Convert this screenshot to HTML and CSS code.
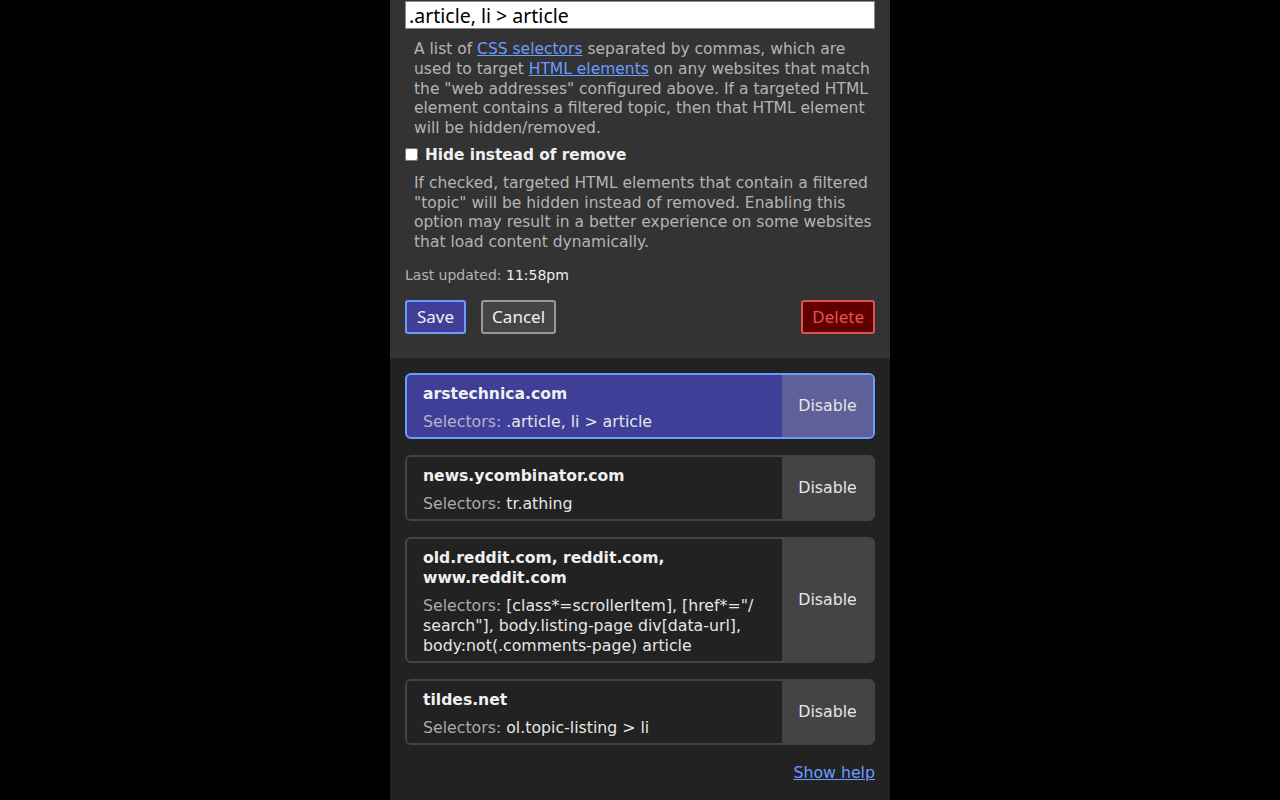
FILE: index.html
```html
<!DOCTYPE html>
<html>
<head>
<meta charset="utf-8">
<link rel="stylesheet" href="styles.css">
</head>
<body>
<div class="panel">
  <section class="editor">
    <input class="selectors-input" type="text" value=".article, li &gt; article">
    <p class="help help-first">A list of <a href="#">CSS selectors</a> separated by commas, which are used to target <a href="#">HTML elements</a> on any websites that match the "web addresses" configured above. If a targeted HTML element contains a filtered topic, then that HTML element will be hidden/removed.</p>
    <label class="check"><input type="checkbox" class="box"><span>Hide instead of remove</span></label>
    <p class="help help-second">If checked, targeted HTML elements that contain a filtered "topic" will be hidden instead of removed. Enabling this option may result in a better experience on some websites that load content dynamically.</p>
    <div class="updated">Last updated: <span class="time">11:58pm</span></div>
    <div class="actions">
      <button class="btn btn-save">Save</button>
      <button class="btn btn-cancel">Cancel</button>
      <span class="spacer"></span>
      <button class="btn btn-delete">Delete</button>
    </div>
  </section>
  <section class="list">
    <div class="card active">
      <div class="card-body">
        <div class="card-title">arstechnica.com</div>
        <div class="card-sel"><span class="lbl">Selectors:</span> .article, li &gt; article</div>
      </div>
      <div class="card-toggle">Disable</div>
    </div>
    <div class="card">
      <div class="card-body">
        <div class="card-title">news.ycombinator.com</div>
        <div class="card-sel"><span class="lbl">Selectors:</span> tr.athing</div>
      </div>
      <div class="card-toggle">Disable</div>
    </div>
    <div class="card">
      <div class="card-body">
        <div class="card-title">old.reddit.com, reddit.com, www.reddit.com</div>
        <div class="card-sel"><span class="lbl">Selectors:</span> [class*=scrollerItem], [href*="/<wbr>search"], body.listing-page div[data-url], body:not(.comments-page) article</div>
      </div>
      <div class="card-toggle">Disable</div>
    </div>
    <div class="card">
      <div class="card-body">
        <div class="card-title">tildes.net</div>
        <div class="card-sel"><span class="lbl">Selectors:</span> ol.topic-listing &gt; li</div>
      </div>
      <div class="card-toggle">Disable</div>
    </div>
    <div class="foot"><a href="#">Show help</a></div>
  </section>
</div>
</body>
</html>
```
FILE: styles.css
```css
html, body {
  margin: 0;
  padding: 0;
  background: #000;
}
body {
  font-family: "DejaVu Sans", Verdana, sans-serif;
  color: #e6e6e6;
}
.panel {
  width: 500px;
  margin: 0 auto;
  min-height: 800px;
  background: #222222;
  display: flex;
  flex-direction: column;
}
.editor {
  background: #333333;
  padding: 1px 15px 23px;
  border-bottom: 1px solid #3a3a3a;
}
.selectors-input {
  display: block;
  box-sizing: border-box;
  width: 470px;
  height: 28px;
  margin: 0;
  padding: 0 3px;
  border: 1px solid #888;
  background: #fff;
  color: #000;
  font-family: "Noto Sans", sans-serif;
  font-size: 19.5px;
}
.help {
  margin: 0 0 0 9px;
  font-size: 15.5px;
  line-height: 19.75px;
  color: #b4b4b4;
}
.help-first {
  margin-top: 11px;
}
.help-second {
  margin-top: 10px;
}
.help a {
  color: #6a9cff;
}
.check {
  display: flex;
  align-items: center;
  gap: 7px;
  margin-top: 7px;
  font-size: 15.3px;
  font-weight: bold;
  color: #f0f0f0;
}
.box {
  margin: 0;
  width: 13px;
  height: 13px;
}
.updated {
  margin-top: 14px;
  font-size: 14px;
  color: #b4b4b4;
}
.time {
  color: #f0f0f0;
}
.actions {
  display: flex;
  align-items: center;
  gap: 15px;
  margin-top: 17px;
}
.spacer {
  flex: 1;
}
.btn {
  height: 34px;
  padding: 0 9px;
  border: 2px solid;
  border-radius: 3px;
  font-family: "Noto Sans", sans-serif;
  font-size: 17px;
}
.btn-save {
  padding: 0 10px;
  background: #3f3f9a;
  border-color: #6a9cff;
  color: #f0f0f0;
}
.btn-cancel {
  background: #444;
  border-color: #999;
  color: #f0f0f0;
}
.btn-delete {
  background: #600000;
  border-color: #e05252;
  color: #e05656;
}
.list {
  padding: 15px 15px 0;
  display: flex;
  flex-direction: column;
  gap: 16px;
}
.card {
  display: flex;
  border: 2px solid #444;
  border-radius: 6px;
  background: #222;
  overflow: hidden;
}
.card.active {
  background: #3f3f99;
  border-color: #6a9cff;
}
.card-body {
  flex: 1;
  padding: 9px 16px 5px;
}
.card-title {
  font-weight: bold;
  font-size: 15.6px;
  line-height: 20px;
  color: #f0f0f0;
  margin-bottom: 8px;
}
.card-sel {
  font-size: 15.75px;
  line-height: 20px;
  color: #e6e6e6;
}
.lbl {
  color: #aaa;
}
.card.active .lbl {
  color: #b4b4c8;
}
.card-toggle {
  width: 91px;
  display: flex;
  align-items: center;
  justify-content: center;
  background: #444;
  font-size: 15.75px;
  color: #e6e6e6;
}
.card.active .card-toggle {
  background: #5f5f9a;
}
.foot {
  display: flex;
  justify-content: flex-end;
  margin-top: 2px;
  font-size: 15.75px;
}
.foot a {
  color: #6a9cff;
}
```
